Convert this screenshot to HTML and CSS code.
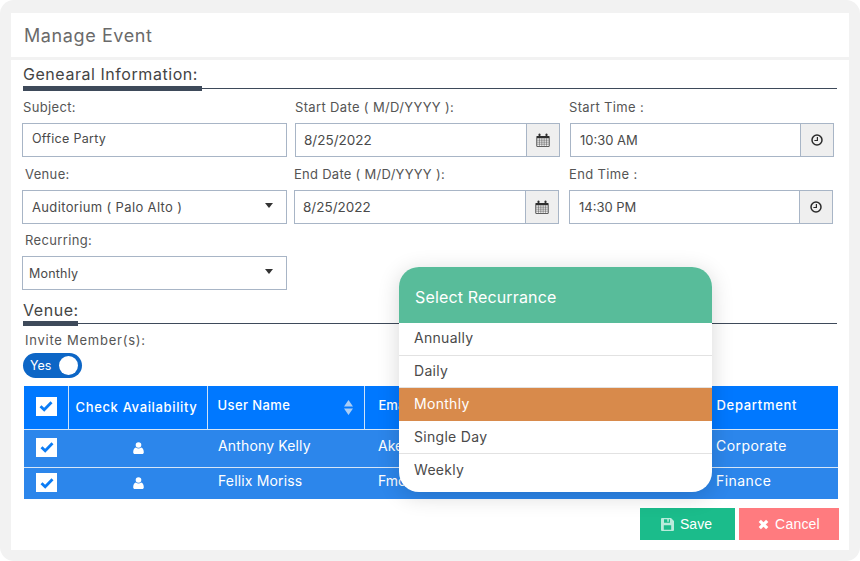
FILE: index.html
```html
<!DOCTYPE html>
<html lang="en">
<head>
<meta charset="utf-8">
<title>Manage Event</title>
<link rel="stylesheet" href="styles.css">
</head>
<body>
<svg class="defs" width="0" height="0" aria-hidden="true">
  <symbol id="i-cal" viewBox="0 0 14 14">
    <path d="M1 2.900h12a.6.6 0 0 1 .6.6v9.600a.6.6 0 0 1-.6.6H1a.6.6 0 0 1-.6-.6V3.500a.6.6 0 0 1 .6-.6zM1.200 5.200v7.700h11.600V5.200z" fill="#2f2f2f" fill-rule="evenodd"/>
    <path d="M3.500 5.200v7.700M5.800 5.200v7.700M8.200 5.200v7.700M10.500 5.200v7.700M1.200 7.200h11.600M1.200 9.200h11.600M1.200 11.200h11.600" stroke="#555" stroke-width=".5" fill="none"/>
    <rect x="2.600" y=".4" width="1.800" height="3.800" rx=".9" fill="#2f2f2f"/>
    <rect x="9.600" y=".4" width="1.800" height="3.800" rx=".9" fill="#2f2f2f"/>
  </symbol>
  <symbol id="i-clock" viewBox="0 0 12 12">
    <circle cx="6" cy="6" r="5" fill="none" stroke="#2b2b2b" stroke-width="1.500"/>
    <path d="M6.400 2.900v3.600H3.400" fill="none" stroke="#2b2b2b" stroke-width="1.200"/>
  </symbol>
  <symbol id="i-check" viewBox="0 0 14 12">
    <path d="M1.500 6.200l3.700 3.500 7.300-7.400" fill="none" stroke="#0b7cf5" stroke-width="2.800"/>
  </symbol>
  <symbol id="i-user" viewBox="0 0 11 12">
    <circle cx="5.500" cy="3" r="2.800" fill="#fff"/>
    <path d="M.2 10.200C.2 7.600 1.300 5.900 2.900 5.500c.7.600 1.600 1 2.600 1s1.900-.4 2.600-1c1.600.4 2.700 2.100 2.700 4.700 0 1-.7 1.800-1.700 1.800H1.900C.9 12 .2 11.200.2 10.200z" fill="#fff"/>
  </symbol>
</svg>
<div class="frame">
  <main class="card">
    <header class="card-head"><h1 class="title">Manage Event</h1></header>
    <div class="card-body">
      <div class="section-title">
        <h2 class="section-name">Genearal Information:</h2>
        <div class="rule"><span class="rule-bar rule-bar-wide"></span><span class="rule-line"></span></div>
      </div>

      <div class="row row-one">
        <div class="field f-main">
          <div class="label label-tight">Subject:</div>
          <div class="control"><span class="value value-subject">Office Party</span></div>
        </div>
        <div class="field f-date">
          <div class="label label-flush">Start Date ( M/D/YYYY ):</div>
          <div class="control"><span class="value value-date">8/25/2022</span><span class="addon"><svg class="ic-cal"><use href="#i-cal"/></svg></span></div>
        </div>
        <div class="field f-time">
          <div class="label label-flush">Start Time :</div>
          <div class="control"><span class="value value-time">10:30 AM</span><span class="addon addon-time"><svg class="ic-clock"><use href="#i-clock"/></svg></span></div>
        </div>
      </div>

      <div class="row row-two">
        <div class="field f-main">
          <div class="label">Venue:</div>
          <div class="control"><span class="value value-select">Auditorium ( Palo Alto )</span><span class="caret"></span></div>
        </div>
        <div class="field f-date">
          <div class="label label-flush">End Date ( M/D/YYYY ):</div>
          <div class="control"><span class="value value-date-b">8/25/2022</span><span class="addon"><svg class="ic-cal"><use href="#i-cal"/></svg></span></div>
        </div>
        <div class="field f-time">
          <div class="label label-flush">End Time :</div>
          <div class="control"><span class="value value-time">14:30 PM</span><span class="addon addon-time"><svg class="ic-clock"><use href="#i-clock"/></svg></span></div>
        </div>
      </div>

      <div class="row row-three">
        <div class="field f-main">
          <div class="label">Recurring:</div>
          <div class="control"><span class="value value-recurring">Monthly</span><span class="caret"></span></div>
        </div>
      </div>

      <div class="section-title section-venue">
        <h2 class="section-name">Venue:</h2>
        <div class="rule"><span class="rule-bar rule-bar-short"></span><span class="rule-line"></span></div>
      </div>

      <div class="label label-invite">Invite Member(s):</div>
      <div class="toggle"><span class="toggle-text">Yes</span><span class="toggle-knob"></span></div>

      <table class="grid">
        <colgroup>
          <col class="c-check"><col class="c-avail"><col class="c-user"><col class="c-email"><col class="c-dept">
        </colgroup>
        <thead>
          <tr>
            <th><span class="box"><svg class="ic-check"><use href="#i-check"/></svg></span></th>
            <th class="th-avail">Check Availability</th>
            <th class="th-user"><span>User Name</span>
              <svg class="ic-sort" viewBox="0 0 9 15"><path d="M4.500 0L9 6.500H0zM4.500 15L0 8.500h9z" fill="#a9cdf5"/></svg>
            </th>
            <th class="th-email">Email</th>
            <th class="th-dept">Department</th>
          </tr>
        </thead>
        <tbody>
          <tr class="row-a">
            <td><span class="box"><svg class="ic-check"><use href="#i-check"/></svg></span></td>
            <td class="td-center"><svg class="ic-user"><use href="#i-user"/></svg></td>
            <td class="td-name">Anthony Kelly</td>
            <td class="td-email">Ake</td>
            <td class="td-dept">Corporate</td>
          </tr>
          <tr class="row-b">
            <td><span class="box"><svg class="ic-check"><use href="#i-check"/></svg></span></td>
            <td class="td-center"><svg class="ic-user"><use href="#i-user"/></svg></td>
            <td class="td-name">Fellix Moriss</td>
            <td class="td-email">Fmo</td>
            <td class="td-dept">Finance</td>
          </tr>
        </tbody>
      </table>

      <div class="actions">
        <button class="btn btn-save" type="button">
          <svg class="ic-btn" viewBox="0 0 13 13"><path fill-rule="evenodd" d="M1 0h9l3 3v9a1 1 0 0 1-1 1H1a1 1 0 0 1-1-1V1a1 1 0 0 1 1-1zm2 1.200v3.500h6V1.200H7.800v2.600H6.300V1.200zM2.800 7.300v4.500h7.400V7.300z" fill="#b9ebdb"/></svg>
          Save
        </button>
        <button class="btn btn-cancel" type="button">
          <svg class="ic-btn ic-x" viewBox="0 0 11 11"><path d="M1.800 1.800l7.400 7.400M9.200 1.800l-7.400 7.400" stroke="#fff" stroke-width="3.200" fill="none"/></svg>
          Cancel
        </button>
      </div>
    </div>
  </main>

  <aside class="popup">
    <div class="popup-head">Select Recurrance</div>
    <ul class="popup-list">
      <li class="popup-item">Annually</li>
      <li class="popup-item">Daily</li>
      <li class="popup-item is-active">Monthly</li>
      <li class="popup-item popup-low">Single Day</li>
      <li class="popup-item popup-low popup-last">Weekly</li>
    </ul>
  </aside>
</div>
</body>
</html>
```
FILE: styles.css
```css
* { box-sizing: border-box; }
html, body { margin: 0; padding: 0; background: #fff; }
body { font-family: Inter, "Noto Sans", sans-serif; color: #444; overflow: hidden; }
.defs { position: absolute; }

.frame {
  position: relative;
  width: 860px;
  height: 561px;
  padding: 13px 11px 11px;
  background: #f2f2f2;
  border-radius: 14px;
}
.card { height: 537px; background: #fff; }
.card-head { height: 44px; padding-left: 13px; display: flex; align-items: center; }
.title { margin: 0; font-size: 18px; font-weight: 400; color: #6a6a6a; letter-spacing: .6px; }
.card-body { border-top: 3px solid #f2f2f2; padding: 0 12px; }

.section-title { height: 31px; padding-top: 4px; }
.section-name { margin: 0; font-size: 16px; line-height: 21px; font-weight: 400; color: #444; letter-spacing: .55px; }
.rule { display: flex; align-items: center; width: 814px; height: 5px; margin-top: 1px; }
.rule-bar { height: 5px; background: #3e4a5a; }
.rule-bar-wide { width: 179px; }
.rule-bar-short { width: 55px; }
.rule-line { flex: 1; height: 1px; background: #3e4a5a; }

.row { display: flex; margin-left: -1px; }
.row-one { margin-top: 6px; }
.row-two { margin-top: 7px; }
.row-three { margin-top: 6px; }
.field { width: 265px; }
.f-time { width: 264px; margin-left: 10px; }
.row-one .f-date { margin-left: 8px; }
.row-two .f-date { margin-left: 7px; }
.label { height: 20px; margin-bottom: 6px; padding-left: 3px; font-size: 13px; line-height: 20px; color: #555; letter-spacing: .35px; white-space: nowrap; }
.label-tight { padding-left: 1px; }
.label-flush { padding-left: 0; }
.row-one .f-time .label { margin-left: -1px; }
.row-two .f-date .label { letter-spacing: .27px; }

.control {
  display: flex;
  align-items: center;
  height: 34px;
  border: 1px solid #a8b5c6;
  background: #fff;
  position: relative;
  font-size: 13px;
  color: #4a4a4a;
}
.value { flex: 1; white-space: nowrap; }
.value-subject { padding: 0 0 3px 9px; font-size: 12.500px; letter-spacing: .3px; }
.value-date, .value-date-b { padding-left: 8px; font-size: 13.500px; }
.value-time { padding-left: 9px; font-size: 13px; }
.value-select { padding-left: 9px; font-size: 13px; letter-spacing: .35px; }
.value-recurring { padding-left: 6px; font-size: 12.500px; letter-spacing: .2px; }
.addon {
  flex: none;
  display: flex;
  align-items: center;
  justify-content: center;
  width: 33px;
  height: 100%;
  background: #efefef;
  border-left: 1px solid #a8b5c6;
}
.ic-cal { width: 14px; height: 14px; }
.ic-clock { width: 12px; height: 12px; }
.caret {
  flex: none;
  width: 0;
  height: 0;
  margin: 0 13px 4px 0;
  border-left: 4.500px solid transparent;
  border-right: 4.500px solid transparent;
  border-top: 5px solid #333;
}

.section-venue { margin-top: 4px; height: 32px; padding-top: 6px; }
.section-venue .rule { margin-top: 0; }
.label-invite { margin: 5px 0 4px; height: 18px; line-height: 18px; padding-left: 2px; letter-spacing: .75px; }

.toggle {
  display: flex;
  align-items: center;
  justify-content: space-between;
  width: 59px;
  height: 25px;
  padding: 0 4px 0 7px;
  background: #0d66c6;
  border-radius: 13px;
  color: #fff;
  font-size: 12.500px;
}
.toggle-knob { width: 19px; height: 19px; border-radius: 50%; background: #fff; }

.grid {
  width: 814px;
  margin: 8px 0 0 1px;
  border-collapse: collapse;
  table-layout: fixed;
  color: #fff;
  font-size: 13px;
}
.c-check { width: 44px; }
.c-avail { width: 139px; }
.c-user { width: 157px; }
.c-email { width: 339px; }
.c-dept { width: 135px; }
thead th {
  height: 43px;
  padding: 0;
  background: #0078ff;
  font-weight: 500;
  text-align: left;
  border-right: 1px solid #cfe2f8;
  white-space: nowrap;
  position: relative;
}
thead th:last-child { border-right: 0; }
tbody td { padding: 0; background: #2c86eb; border-top: 1px solid #d6e6f8; white-space: nowrap; font-size: 14px; }
.row-a td { height: 38px; }
.row-b td { height: 32px; }
thead th:first-child, tbody td:first-child { text-align: center; padding-bottom: 2px; }
.box {
  display: inline-flex;
  align-items: center;
  justify-content: center;
  width: 21px;
  height: 19px;
  background: #fff;
  vertical-align: middle;
  margin-left: 1px;
}
.ic-check { width: 14px; height: 12px; }
thead th.th-avail { padding-left: 7px; letter-spacing: .65px; }
thead th.th-user { padding: 0 0 4px 10px; letter-spacing: .4px; }
thead th.th-email { padding: 0 0 4px 14px; }
thead th.th-dept { padding: 0 0 4px 13px; letter-spacing: .7px; }
.ic-sort { position: absolute; right: 11px; top: 14px; width: 9px; height: 15px; }
tbody td.td-center { text-align: center; padding: 0 0 3px 2px; }
.ic-user { width: 11px; height: 12px; vertical-align: middle; }
tbody td.td-name { padding: 0 0 5px 11px; letter-spacing: .15px; }
tbody td.td-email { padding: 0 0 5px 14px; }
tbody td.td-dept { padding: 0 0 5px 13px; letter-spacing: .45px; }

.actions { display: flex; justify-content: flex-end; gap: 4px; margin: 9px -2px 0 0; }
.btn {
  display: flex;
  align-items: center;
  justify-content: center;
  height: 32px;
  border: 0;
  padding: 0;
  color: #fff;
  font-family: "Liberation Sans", Arial, sans-serif;
  font-size: 14px;
}
.btn-save { width: 95px; background: #1bbc8b; padding-right: 2px; }
.btn-cancel { width: 100px; background: #ff7b7f; letter-spacing: .2px; }
.ic-btn { width: 13px; height: 13px; margin-right: 6px; }
.ic-x { width: 11px; height: 11px; }

.popup {
  position: absolute;
  left: 399px;
  top: 267px;
  width: 313px;
  height: 225px;
  border-radius: 20px;
  background: #fff;
  box-shadow: 0 4px 22px rgba(0, 0, 0, .16);
  overflow: hidden;
}
.popup-head {
  display: flex;
  align-items: center;
  height: 56px;
  padding: 3px 0 0 16px;
  background: #58bc9a;
  color: #fff;
  font-size: 16px;
  letter-spacing: .15px;
}
.popup-list { margin: 0; padding: 0; list-style: none; }
.popup-item {
  height: 32.700px;
  padding: 0 0 3px 15px;
  display: flex;
  align-items: center;
  border-bottom: 1px solid #e2e2e2;
  font-size: 14px;
  letter-spacing: .3px;
  color: #4a4a4a;
}
.popup-low { padding-bottom: 1px; }
.popup-item.is-active { background: #d88a4b; color: #fff; border-bottom: 0; }
.popup-last { border-bottom: 0; }
```
